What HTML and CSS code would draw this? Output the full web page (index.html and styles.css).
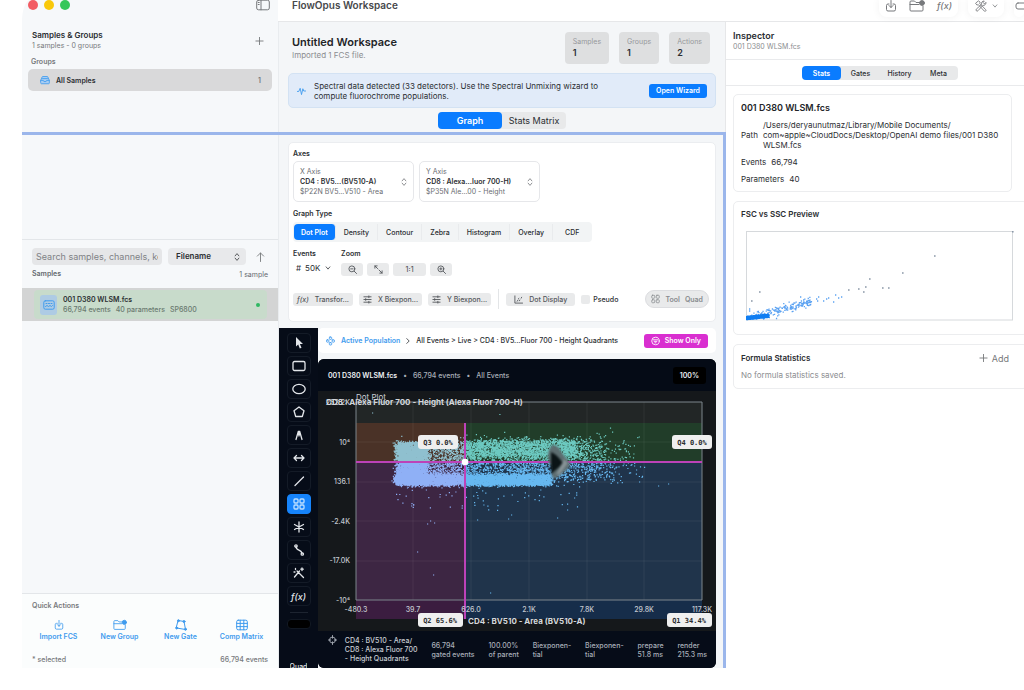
FILE: index.html
```html
<!DOCTYPE html>
<html lang="en">
<head>
<meta charset="utf-8">
<meta name="viewport" content="width=device-width, initial-scale=1">
<title>FlowOpus Workspace</title>
<link rel="stylesheet" href="styles.css">
</head>
<body>
<svg class="sprite" aria-hidden="true">
  <symbol id="i-import" viewBox="0 0 12 12"><path d="M4 4H3a1.5 1.5 0 0 0-1.500 1.500v4A1.500 1.500 0 0 0 3 11h6a1.500 1.500 0 0 0 1.500-1.500v-4A1.500 1.500 0 0 0 9 4H8M6 .5v7M4 5.500l2 2 2-2"/></symbol>
  <symbol id="i-folder" viewBox="0 0 16 12"><path d="M12 2.500H7L5.500 1H2a1 1 0 0 0-1 1v8a1 1 0 0 0 1 1h11a1 1 0 0 0 1-1V6M1 4.500h9"/><circle cx="13" cy="3" r="2.400" fill="currentColor"/></symbol>
  <symbol id="i-gate" viewBox="0 0 12 12"><path d="M3.500 1.500 9 2.500l1.500 8-9-1.500z"/><g fill="currentColor"><circle cx="3.500" cy="1.700" r="1"/><circle cx="9" cy="2.500" r="1"/><circle cx="10.500" cy="10.300" r="1"/><circle cx="1.700" cy="9" r="1"/></g></symbol>
  <symbol id="i-table" viewBox="0 0 12 11"><rect x=".7" y=".7" width="10.600" height="9.600" rx="1.500"/><path d="M.7 3.900h10.600M.7 7.100h10.600M4.200.7v9.600M7.800.7v9.600"/></symbol>
  <symbol id="i-updown" viewBox="0 0 8 12"><path d="m1.500 4.500 2.500-3 2.500 3M1.500 7.500l2.500 3 2.500-3"/></symbol>
  <symbol id="i-sliders" viewBox="0 0 10 10"><path d="M1 2h8M1 5h8M1 8h8M6.500 1v2M3 4v2M6.500 7v2"/></symbol>
  <symbol id="i-grid" viewBox="0 0 12 12"><rect x="1" y="1" width="4" height="4" rx="1"/><rect x="7" y="1" width="4" height="4" rx="1"/><rect x="1" y="7" width="4" height="4" rx="1"/><rect x="7" y="7" width="4" height="4" rx="1"/></symbol>
  <symbol id="i-plus" viewBox="0 0 10 10"><path d="M5 1v8M1 5h8"/></symbol>
  <symbol id="i-down" viewBox="0 0 8 8"><path d="m1.500 2.500 2.500 3 2.500-3"/></symbol>
</svg>

<div class="app">
  <aside class="sidebar">
    <div class="window-bar">
      <span class="light light-red"></span><span class="light light-yellow"></span><span class="light light-green"></span>
      <button class="plain push" aria-label="Toggle sidebar"><svg class="icon w14" viewBox="0 0 14 11"><rect x=".7" y=".7" width="12.600" height="9.600" rx="1.800"/><path d="M5 .7v9.600M2.200 3h1M2.200 5h1"/></svg></button>
    </div>

    <section class="groups">
      <div class="groups-head">
        <div>
          <h2>Samples &amp; Groups</h2>
          <p>1 samples - 0 groups</p>
        </div>
        <button class="plain" aria-label="Add group"><svg class="icon w8" ><use href="#i-plus"/></svg></button>
      </div>
      <h3>Groups</h3>
      <button class="group-row">
        <svg class="icon w10 blue" viewBox="0 0 12 10"><path fill="#a9cdf2" d="M.8 5.500 2.500 1.500a1 1 0 0 1 1-.7h5a1 1 0 0 1 1 .7l1.700 4v3a1 1 0 0 1-1 1H1.800a1 1 0 0 1-1-1z"/><path d="M.8 5.500H4a2 1.500 0 0 0 4 0h3.200M3 3.300h6"/></svg>
        <span>All Samples</span><span class="push count">1</span>
      </button>
    </section>

    <section class="samples">
      <div class="search-row">
        <input class="search" type="text" placeholder="Search samples, channels, keywords" aria-label="Search samples">
        <span class="select-wrap sort"><select aria-label="Sort by"><option>Filename</option></select><svg class="icon w6"><use href="#i-updown"/></svg></span>
        <button class="plain sort-dir" aria-label="Sort ascending"><svg class="icon w8" viewBox="0 0 10 12"><path d="M5 11V1.500M1.500 5 5 1.500 8.500 5"/></svg></button>
      </div>
      <div class="samples-head"><h3>Samples</h3><span>1 sample</span></div>
      <div class="sample-slot">
        <button class="sample">
          <span class="sample-icon"><svg class="icon w12 blue" viewBox="0 0 12 10"><rect x=".8" y=".8" width="10.400" height="8.400" rx="1.500"/><path d="M3 3.500h1M5.500 3.500h1M8 3.500h1M2.500 6.500l1.500-1 1.500 1 1.500-1 1.500 1 1-1"/></svg></span>
          <span class="sample-text"><b>001 D380 WLSM.fcs</b><span class="meta"><span>66,794 events</span><span>40 parameters</span><span>SP6800</span></span></span>
          <span class="dot-ok push"></span>
        </button>
      </div>
    </section>

    <section class="quick">
      <h3>Quick Actions</h3>
      <div class="quick-grid">
        <button><svg class="icon w10"><use href="#i-import"/></svg>Import FCS</button>
        <button><svg class="icon w14"><use href="#i-folder"/></svg>New Group</button>
        <button><svg class="icon w12"><use href="#i-gate"/></svg>New Gate</button>
        <button><svg class="icon w12"><use href="#i-table"/></svg>Comp Matrix</button>
      </div>
      <div class="quick-foot"><span>* selected</span><span>66,794 events</span></div>
    </section>
  </aside>

  <header class="titlebar">
    <h1>FlowOpus Workspace</h1>
    <div class="tools push">
      <button class="plain" aria-label="Import"><svg class="icon w12"><use href="#i-import"/></svg></button>
      <button class="plain" aria-label="New group"><svg class="icon w16"><use href="#i-folder"/></svg></button>
      <button class="plain fx">f(x)</button>
    </div>
    <div class="tools">
      <button class="plain pair" aria-label="Tools"><svg class="icon w14" viewBox="0 0 14 14"><path d="M1 3.500 4 1l2 1.500-.5 1.500 7 7.300a1.100 1.100 0 0 1-1.700 1.600L4 5.500l-1.300.3zM12.800 3.200a2.800 2.800 0 0 1-3.600 3L3.500 12.500a1.300 1.300 0 0 1-2-1.800L7.800 5a2.800 2.800 0 0 1 3-3.800L9.500 3l1.300 1.300z"/></svg><svg class="icon w6"><use href="#i-down"/></svg></button>
    </div>
    <div class="tools tools-cut"><button class="plain" aria-label="Panels"><svg class="icon w8" viewBox="0 0 9 8"><rect x="1" y="1" width="10" height="6" rx="2"/></svg></button></div>
  </header>

  <main class="center">
    <section class="intro">
      <div class="intro-title"><h2>Untitled Workspace</h2><p>Imported 1 FCS file.</p></div>
      <dl class="stats">
        <div><dt>Samples</dt><dd>1</dd></div>
        <div><dt>Groups</dt><dd>1</dd></div>
        <div><dt>Actions</dt><dd>2</dd></div>
      </dl>
    </section>

    <section class="banner">
      <svg class="icon w8 blue" viewBox="0 0 10 10"><path d="M.5 5.500H2L3.500 2l1.500 7 1.500-6.500L7.500 5h2"/></svg>
      <p>Spectral data detected (33 detectors). Use the Spectral Unmixing wizard to compute fluorochrome populations.</p>
      <button class="primary push">Open Wizard</button>
    </section>

    <div class="segment view-tabs" role="tablist">
      <button class="on" role="tab" aria-selected="true">Graph</button><button role="tab" aria-selected="false">Stats Matrix</button>
    </div>

    <section class="panel">
      <h3>Axes</h3>
      <div class="axes">
        <button class="axis"><span><span>X Axis</span><b>CD4 : BV5...(BV510-A)</b><span>$P22N BV5...V510 - Area</span></span><svg class="icon w6"><use href="#i-updown"/></svg></button>
        <button class="axis"><span><span>Y Axis</span><b>CD8 : Alexa...luor 700-H)</b><span>$P35N Ale...00 - Height</span></span><svg class="icon w6"><use href="#i-updown"/></svg></button>
      </div>
      <h3>Graph Type</h3>
      <div class="segment graph-types" role="tablist">
        <button class="on" role="tab" aria-selected="true">Dot Plot</button><button role="tab">Density</button><button role="tab">Contour</button><button role="tab">Zebra</button><button role="tab">Histogram</button><button role="tab">Overlay</button><button role="tab">CDF</button>
      </div>
      <div class="view-opts">
        <div class="opt">
          <label for="events">Events</label>
          <span class="select-wrap events"><span>#</span><select id="events"><option>50K</option></select><svg class="icon w6"><use href="#i-down"/></svg></span>
        </div>
        <div class="opt">
          <h3>Zoom</h3>
          <div class="zooms">
            <button class="chip" aria-label="Zoom out"><svg class="icon w8" viewBox="0 0 10 10"><circle cx="4.300" cy="4.300" r="3.300"/><path d="M7 7l2.500 2.500M3 4.300h2.600"/></svg></button>
            <button class="chip" aria-label="Fit"><svg class="icon w8" viewBox="0 0 10 10"><path d="M4 4 1 1m0 2.500V1h2.500M5.500 5.500 9 9M9 6.500V9H6.500"/></svg></button>
            <button class="chip wide">1:1</button>
            <button class="chip" aria-label="Zoom in"><svg class="icon w8" viewBox="0 0 10 10"><circle cx="4.300" cy="4.300" r="3.300"/><path d="M7 7l2.500 2.500M3 4.300h2.600M4.300 3v2.600"/></svg></button>
          </div>
        </div>
      </div>
      <div class="display-row">
        <button class="chip"><i>f(x)</i>Transfor...</button>
        <button class="chip"><svg class="icon w8"><use href="#i-sliders"/></svg>X Biexpon...</button>
        <button class="chip"><svg class="icon w8"><use href="#i-sliders"/></svg>Y Biexpon...</button>
        <span class="rule"></span>
        <button class="chip roomy"><svg class="icon w8" viewBox="0 0 10 10"><path d="M1 1v8h8.500M3.500 7l1-1.500M6 6.500l.5-1M5 4l.5-.5M8 3.500l.5-1"/></svg>Dot Display</button>
        <label class="check"><input type="checkbox">Pseudo</label>
        <button class="pill push"><svg class="icon w8"><use href="#i-grid"/></svg><span>Tool</span><span>Quad</span></button>
      </div>
    </section>

    <section class="graph">
      <nav class="gate-tools" aria-label="Gate tools">
        <button aria-label="Pointer"><svg class="icon w12" viewBox="0 0 12 12"><path fill="currentColor" stroke="none" d="M3 0v9.500l2.200-2L6.800 11.500l1.700-.7L6.900 7H10z"/></svg></button>
        <button aria-label="Rectangle"><svg class="icon w14" viewBox="0 0 14 12"><rect x="1" y="1.500" width="12" height="9" rx="1.500"/></svg></button>
        <button aria-label="Ellipse"><svg class="icon w14" viewBox="0 0 14 12"><ellipse cx="7" cy="6" rx="6.200" ry="4.700"/></svg></button>
        <button aria-label="Polygon"><svg class="icon w12" viewBox="0 0 12 12"><path d="M6 1 11 4.800 9.300 10.500H2.700L1 4.800z"/></svg></button>
        <button aria-label="Curve"><svg class="icon w12" viewBox="0 0 12 12"><path d="M3 10.500 5.300 2.500h1.400L9 10.500M5.300 2.500 6 7l.7-4.500"/></svg></button>
        <button aria-label="Range"><svg class="icon w12" viewBox="0 0 12 12"><path d="M1 6h10M3.500 3.500 1 6l2.500 2.500M8.500 3.500 11 6 8.500 8.500"/></svg></button>
        <button aria-label="Line"><svg class="icon w12" viewBox="0 0 12 12"><path d="M2 10.500 10.500 2"/></svg></button>
        <button class="on" aria-label="Quadrant"><svg class="icon w12"><use href="#i-grid"/></svg></button>
        <button aria-label="Spider"><svg class="icon w12" viewBox="0 0 12 12"><path d="M6 1v10M1.500 3.500l9 5M10.500 3.500l-9 5"/></svg></button>
        <button aria-label="Path"><svg class="icon w12" viewBox="0 0 12 12"><path d="M3 2.500c0 5 5.500 2 6 7"/><circle cx="3" cy="2" r="1.200"/><circle cx="9.300" cy="10" r="1.200"/></svg></button>
        <button aria-label="Magic wand"><svg class="icon w12" viewBox="0 0 12 12"><path d="M4 4l6.500 6.500M6.500 4 1.500 10M9 1v2.500M7.800 2.200h2.500M2.500 1.500v1M1 5h1"/></svg></button>
        <button class="fx" aria-label="Formula">f(x)</button>
        <span class="tool-rule"></span>
        <span class="swatch"></span>
        <span class="tool-label">Quad</span>
      </nav>

      <div class="graph-main">
        <div class="crumbs">
          <svg class="icon w8 blue" viewBox="0 0 10 10"><rect x="3.700" y=".6" width="2.600" height="2.600" rx=".8"/><rect x="3.700" y="6.800" width="2.600" height="2.600" rx=".8"/><rect x=".6" y="3.700" width="2.600" height="2.600" rx=".8"/><rect x="6.800" y="3.700" width="2.600" height="2.600" rx=".8"/></svg>
          <b class="blue">Active Population</b>
          <svg class="icon w4" viewBox="0 0 5 8"><path d="m1 1 3 3-3 3"/></svg>
          <span>All Events &gt; Live &gt; CD4 : BV5...Fluor 700 - Height Quadrants</span>
          <button class="show-only push"><svg class="icon w8" viewBox="0 0 10 10"><circle cx="5" cy="5" r="4.200"/><path d="M2.500 3.700h5M3.500 5.400h3M4.400 7h1.200"/></svg>Show Only</button>
        </div>

        <div class="plot-card">
          <div class="plot-head"><b>001 D380 WLSM.fcs</b><span>•</span><span>66,794 events</span><span>•</span><span>All Events</span><b class="percent push">100%</b></div>
          <svg class="plot" viewBox="0 0 398 240" role="img" aria-label="Dot plot of CD4 against CD8">
            <rect x="38" y="11" width="346" height="21" fill="#222626"/>
            <rect x="38" y="32" width="109" height="39" fill="#4a3227"/>
            <rect x="147" y="32" width="237" height="39" fill="#213d29"/>
            <rect x="38" y="71" width="109" height="157" fill="#3d2643"/>
            <rect x="147" y="71" width="237" height="157" fill="#20344b"/>
            <rect x="38" y="209" width="109" height="19" fill="#3a1740" opacity=".6"/>
            <rect x="147" y="209" width="237" height="19" fill="#102a4a" opacity=".6"/>
            <path class="grid" d="M95 11v198M153 11v198M211 11v198M269 11v198M326 11v198M38 51h346M38 91h346M38 130h346M38 170h346"/>
            <path class="frame" d="M38 11h346v198H38z"/>
            <g id="dots"></g>
            <path class="cross" d="M147 32v196M38 71h346"/>
            <g class="smudge"><path d="M236 54c6 1 7 8 13 14s2 9-4 14-10 8-11 3 1-6-2-11-3-19 4-20z" fill="#5d6d70"/><path d="M233 61c5 2 9 7 12 11-3 4-8 7-12 11z" fill="#0b1416"/><path d="M246 68l4 4-8 11-4 1z" fill="#a3adb0" opacity=".6"/></g>
            <circle cx="147" cy="71" r="3.300" fill="#fff"/>
            <g class="ticks">
              <text x="32" y="54" text-anchor="end">10⁴</text><text x="32" y="93" text-anchor="end">136.1</text><text x="32" y="133" text-anchor="end">-2.4K</text><text x="32" y="172" text-anchor="end">-17.0K</text><text x="32" y="212" text-anchor="end">-10⁴</text>
              <text x="38" y="221">-480.3</text><text x="95" y="221">39.7</text><text x="153" y="221">626.0</text><text x="211" y="221">2.1K</text><text x="269" y="221">7.8K</text><text x="326" y="221">29.8K</text><text x="384" y="221">117.3K</text>
              <text x="32" y="14" text-anchor="end">262.2K</text>
            </g>
            <text class="plot-title" x="38" y="9">Dot Plot</text>
            <text class="axis-title" x="8" y="14">CD8 : Alexa Fluor 700 - Height (Alexa Fluor 700-H)</text>
            <text class="axis-title" x="150" y="233">CD4 : BV510 - Area (BV510-A)</text>
            <g class="tag"><rect x="100" y="44" width="40" height="14" rx="3"/><text x="120" y="54">Q3 0.0%</text></g>
            <g class="tag"><rect x="354" y="44" width="40" height="14" rx="3"/><text x="374" y="54">Q4 0.0%</text></g>
            <g class="tag"><rect x="100" y="222" width="45" height="14" rx="3"/><text x="122" y="232">Q2 65.6%</text></g>
            <g class="tag"><rect x="349" y="222" width="45" height="14" rx="3"/><text x="371" y="232">Q1 34.4%</text></g>
          </svg>
          <div class="plot-foot">
            <svg class="icon w8" viewBox="0 0 10 10"><circle cx="5" cy="5" r="3.300"/><path d="M5 0v3M5 7v3M0 5h3M7 5h3"/></svg>
            <b>CD4 : BV510 - Area/<br>CD8 : Alexa Fluor 700<br>- Height Quadrants</b>
            <span>66,794<br>gated events</span><span>100.00%<br>of parent</span><span>Biexponen-<br>tial</span><span>Biexponen-<br>tial</span><span>prepare<br>51.8 ms</span><span>render<br>215.3 ms</span>
          </div>
        </div>
      </div>
    </section>
  </main>

  <aside class="inspector">
    <header class="inspector-head"><h2>Inspector</h2><p>001 D380 WLSM.fcs</p></header>
    <div class="inspector-tabs">
      <div class="segment" role="tablist">
        <button class="on" role="tab" aria-selected="true">Stats</button><button role="tab">Gates</button><button role="tab">History</button><button role="tab">Meta</button>
      </div>
    </div>
    <div class="cards">
      <section class="card file-card">
        <h2>001 D380 WLSM.fcs</h2>
        <dl>
          <div><dt>Path</dt><dd>/Users/deryaunutmaz/Library/Mobile Documents/<br>com~apple~CloudDocs/Desktop/OpenAI demo files/001 D380 WLSM.fcs</dd></div>
          <div><dt>Events</dt><dd>66,794</dd></div>
          <div><dt>Parameters</dt><dd>40</dd></div>
        </dl>
      </section>
      <section class="card bleed">
        <h3>FSC vs SSC Preview</h3>
        <svg class="preview" viewBox="0 0 268 90" role="img" aria-label="FSC vs SSC preview">
          <rect x=".5" y=".5" width="266" height="88.500" fill="none" stroke="#d6d9dc"/>
          <g id="preview-dots"></g>
        </svg>
      </section>
      <section class="card bleed">
        <div class="formula-head"><h3>Formula Statistics</h3><button class="plain push pair"><svg class="icon w8"><use href="#i-plus"/></svg>Add</button></div>
        <p>No formula statistics saved.</p>
      </section>
    </div>
  </aside>

  <div class="focus-ring"></div>
</div>
<script src="plot.js"></script>
</body>
</html>
```
FILE: styles.css
```css
* { box-sizing: border-box; }
body { margin: 0; background: #fff; color: #2b2e32; font: 8px/11px Inter, "Noto Sans", sans-serif; }
h1, h2, h3, p, dl, dd { margin: 0; }
h2, h3, b { font-weight: 600; }
h3 { font-size: 8px; line-height: 10px; }
button, input, select { font: inherit; color: inherit; margin: 0; padding: 0; border: 0; background: none; }
button { display: flex; align-items: center; justify-content: center; white-space: nowrap; }
select { appearance: none; }

.sprite { position: absolute; width: 0; height: 0; }
.icon { flex: none; fill: none; stroke: currentColor; stroke-width: 1; stroke-linecap: round; stroke-linejoin: round; height: 12px; }
.w4 { width: 4px; } .w6 { width: 6px; } .w8 { width: 9px; } .w10 { width: 10px; }
.w12 { width: 12px; } .w14 { width: 14px; } .w16 { width: 16px; }
.blue { color: #3f9bee; }
.push { margin-left: auto; }
.plain { color: #77797c; }
.pair { gap: 4px; }

.app { display: grid; grid-template-columns: 256px minmax(0, 1fr) 298px; grid-template-rows: 22px auto; margin-left: 22px; overflow: hidden; }
.focus-ring { grid-area: 2 / 1 / 3 / 3; margin-top: 110px; border: solid #9bb6eb; border-width: 3px 3px 0 0; pointer-events: none; z-index: 1; }

/* Sidebar */
.sidebar { grid-area: 1 / 1 / 3 / 2; display: flex; flex-direction: column; background: #f6f8fa; border-top-left-radius: 8px 22px; }
.window-bar { display: flex; gap: 6px; height: 10px; padding: 0 8px 0 6px; align-items: center; }
.light { width: 10px; height: 10px; border-radius: 50%; }
.light-red { background: #f25c63; } .light-yellow { background: #f9c80a; } .light-green { background: #35c759; }
.groups { min-height: 230px; padding: 20px 6px 0; border-bottom: 1px solid #e3e6e9; }
.groups-head { display: flex; justify-content: space-between; align-items: center; padding: 0 8px 0 4px; }
.groups-head h2 { font-size: 8px; line-height: 10px; }
.groups-head p { color: #77797c; font-size: 7px; line-height: 12px; }
.groups h3 { margin: 5px 0 2px 3px; color: #77797c; font-size: 7px; }
.group-row { width: 100%; height: 22px; gap: 6px; padding: 0 11px 0 12px; border-radius: 5px; background: #d9d9da; font-size: 7px; font-weight: 600; }
.count { color: #77797c; }
.samples { flex: 1; padding-top: 8px; }
.search-row { display: flex; align-items: center; gap: 6px; padding: 0 9px 0 10px; font-size: 9px; }
.search { flex: 1; min-width: 0; height: 17px; padding: 0 4px; border-radius: 4px; background: #e5e6e8; }
.search::placeholder { color: #808286; opacity: 1; }
.select-wrap { display: flex; align-items: center; }
.sort { width: 78px; height: 17px; padding: 0 6px 0 8px; border-radius: 4px; background: #e8e9eb; }
.sort select { flex: 1; font-size: 8px; font-weight: 600; }
.sort-dir { width: 17px; }
.samples-head { display: flex; justify-content: space-between; margin: 4px 0 8px; padding: 0 10px; color: #65696f; font-size: 7px; }
.samples-head h3 { font-size: 7px; }
.sample-slot { padding: 2px 11px 2px 12px; background: #d3d4d4; }
.sample { width: 100%; height: 29px; padding: 0 7px 0 6px; gap: 6px; border-radius: 4px; background: #c8dbcb; text-align: left; }
.sample-icon { display: grid; place-items: center; width: 17px; height: 20px; border-radius: 3px; background: #aecbe4; }
.sample-text { display: grid; line-height: 10px; font-size: 7px; }
.meta { display: flex; gap: 5px; color: #6a7a70; font-weight: 500; }
.dot-ok { width: 4px; height: 4px; border-radius: 50%; background: #2fb862; }
.quick { padding: 7px 10px 0; height: 75px; border-top: 1px solid #e3e6e9; background: #fbfdfd; color: #77797c; }
.quick h3 { font-size: 7px; }
.quick-grid { display: grid; grid-template-columns: repeat(4, 1fr); margin: 8px -4px 0; }
.quick-grid button { flex-direction: column; gap: 1px; color: #3f9bee; font-size: 7px; line-height: 10px; font-weight: 600; }
.quick-foot { display: flex; justify-content: space-between; margin-top: 12px; font-size: 7px; font-weight: 500; }

/* Title bar */
.titlebar { grid-area: 1 / 2 / 2 / 4; display: flex; align-items: flex-start; gap: 10px; padding-left: 14px; border-bottom: 1px solid #e6e7e9; background: #fff; z-index: 2; }
.titlebar h1 { font-size: 10px; line-height: 11px; font-weight: 600; color: #46484b; }
.tools { display: flex; align-items: center; gap: 12px; height: 17px; padding: 0 6px 6px; border-radius: 0 0 8px 8px; box-shadow: 0 0 8px #0000000f; }
.tools-cut { width: 10px; padding: 0 0 6px 1px; overflow: hidden; }
.fx { font-style: italic; font-size: 9px; font-weight: 500; }

/* Centre column */
.center { grid-area: 2 / 2 / 3 / 3; background: #f4f6f8; border-right: 1px solid #e6e7e9; border-left: 1px solid #e9ecef; }
.intro { display: flex; justify-content: space-between; padding: 10px 15px 0 13px; }
.intro h2 { margin-top: 3px; font-size: 11px; line-height: 14px; color: #222427; }
.intro p { color: #8b8d90; line-height: 13px; }
.stats { display: flex; gap: 10px; }
.stats div { min-width: 40px; height: 32px; padding: 5px 8px; border-radius: 4px; background: #dedfe0; }
.stats dt { font-size: 7px; line-height: 10px; color: #96989b; }
.stats dd { font-size: 9px; line-height: 12px; font-weight: 600; }
.banner { display: flex; align-items: center; gap: 8px; height: 35px; margin: 9px 9px 0 9px; padding: 0 8px; border: 1px solid #d3e2f3; border-radius: 5px; background: #e1ebf9; }
.banner p { max-width: 300px; line-height: 10px; }
.primary { height: 14px; padding: 0 7px; border-radius: 3px; background: #0a7cff; color: #fff; font-size: 7px; font-weight: 600; }
.segment { display: flex; border-radius: 4px; background: #e8e9ea; width: max-content; }
.segment .on { background: #0a7cff; color: #fff; border-radius: 4px; font-weight: 600; }
.view-tabs { height: 17px; margin: 4px auto 13px; font-size: 9px; }
.view-tabs button { width: 64px; }
.panel { margin: 0 9px 6px 9px; min-height: 180px; padding: 6px 6px 0 4px; border: 1px solid #ebedf0; border-radius: 5px; background: #fff; }
.panel h3, .opt label { font-size: 7px; line-height: 10px; font-weight: 600; }
.axes { display: flex; gap: 5px; margin: 2px 0 7px; }
.axis { width: 121px; height: 41px; padding: 0 6px; justify-content: space-between; border: 1px solid #e6e7ea; border-radius: 5px; text-align: left; font-size: 7px; line-height: 10px; color: #6b6e72; }
.axis > span { display: grid; }
.axis b { color: #2b2e32; }
.graph-types { height: 20px; margin: 3px 0 7px; padding: 2px 1px; background: #f2f4f5; font-size: 7px; }
.graph-types button { padding: 0 8px; border-right: 1px solid #e9ebed; font-weight: 500; }
.graph-types .on { padding: 0 7px; }
.graph-types button:last-child { padding: 0 12px; border: 0; }
.view-opts { display: flex; gap: 10px; }
.opt { display: grid; align-content: start; gap: 4px; }
.events { gap: 4px; height: 10px; padding-left: 3px; }
.zooms { display: flex; gap: 4px; }
.chip { height: 13px; min-width: 22px; gap: 6px; padding: 0 4px; border-radius: 3px; background: #e9eaeb; color: #55585c; font-size: 7px; font-weight: 500; }
.chip.wide { width: 33px; }
.chip.roomy { padding: 0 8px; }
.zooms .icon, .chip .icon { height: 9px; }
.display-row { display: flex; align-items: center; gap: 6px; margin-top: 13px; }
.rule { width: 1px; height: 20px; background: #e3e5e7; margin: 0 1px; }
.check { display: flex; align-items: center; gap: 3px; font-size: 7px; font-weight: 500; }
.check input { appearance: none; width: 9px; height: 9px; border-radius: 2px; background: #e9eaeb; }
.pill { height: 18px; gap: 5px; padding: 0 5px; border-radius: 9px; border: 1px solid #dcdde0; background: #e9eaeb; color: #888b8f; font-size: 7px; font-weight: 600; }

/* Graph */
.graph { display: flex; }
.gate-tools { display: flex; flex-direction: column; align-items: center; gap: 3px; width: 39px; padding-top: 5px; background: #060c18; color: #e3e6ea; }
.gate-tools button { width: 24px; height: 20px; border: 1px solid #141b27; border-radius: 4px; }
.gate-tools .on { background: #1684fb; border-color: #1684fb; color: #bfe0ff; }
.gate-tools .icon { stroke-width: 1.3; }
.tool-rule { width: 18px; height: 1px; margin-top: 3px; background: #1d2430; }
.swatch { width: 24px; height: 10px; margin-top: 3px; border-radius: 4px; background: #000; border: 1px solid #111823; }
.tool-label { height: 6px; margin-top: auto; overflow: hidden; font-size: 7px; line-height: 9px; font-weight: 500; }
.graph-main { flex: 1; min-width: 0; margin-right: 9px; }
.crumbs { display: flex; align-items: center; gap: 6px; height: 25px; padding: 0 8px; border-radius: 5px; background: #fff; font-size: 7px; font-weight: 500; white-space: nowrap; }
.show-only { height: 14px; gap: 5px; padding: 0 7px; border-radius: 3px; background: #d92fd0; color: #fff; font-weight: 600; }
.plot-card { margin-top: 6px; border-radius: 6px; overflow: hidden; background: #15181b; color: #dfe3e8; }
.plot-head { display: flex; align-items: center; gap: 6px; height: 32px; padding: 0 10px; background: #050b16; font-size: 7px; font-weight: 500; color: #a9afb8; }
.plot-head b { color: #eef1f4; }
.percent { padding: 3px 7px; border-radius: 3px; background: #000; font-size: 7px; }
.plot { display: block; width: 100%; font-family: Inter, sans-serif; }
.grid { fill: none; stroke: #ffffff10; }
.frame { fill: none; stroke: #7d858c; stroke-width: 1; }
.cross { fill: none; stroke: #bd42b8; stroke-width: 2; }
.smudge { filter: blur(1px); }
.ticks { font-size: 7px; font-weight: 500; fill: #c3c8cf; text-anchor: middle; }
.plot-title { font-size: 8px; fill: #c9ced4; }
.axis-title { font-size: 8px; font-weight: 700; fill: #d3d7dc; }
.tag rect { fill: #efefef; }
.tag text { font: 700 7px "DejaVu Sans Mono", monospace; fill: #2a2c2e; text-anchor: middle; }
.plot-foot { display: flex; align-items: center; justify-content: space-between; height: 37px; padding: 0 9px 0 10px; background: #060c18; font-size: 7px; line-height: 9px; font-weight: 500; color: #a9afb8; }
.plot-foot .icon { align-self: flex-start; margin: 3px -6px 0 0; }
.plot-foot b { font-weight: 500; color: #c9ced4; }

/* Inspector */
.inspector { grid-area: 2 / 3 / 3 / 4; min-width: 0; background: #fff; }
.inspector-head { height: 38px; padding: 8px 7px 0; border-bottom: 1px solid #e9eaec; }
.inspector-head h2 { font-size: 9px; line-height: 12px; }
.inspector-head p { font-size: 7px; line-height: 10px; color: #8b8d90; }
.inspector-tabs { display: flex; justify-content: center; padding: 6px 0 5px 10px; border-bottom: 1px solid #e9eaec; }
.inspector-tabs .segment { height: 14px; font-size: 7px; }
.inspector-tabs button { width: 39px; font-weight: 500; }
.cards { display: grid; gap: 9px; padding: 8px 12px 0 7px; }
.card { padding: 7px; border: 1px solid #ecedef; border-radius: 5px; }
.bleed { margin-right: -16px; padding-right: 18px; }
.file-card h2 { font-size: 9px; line-height: 12px; color: #222427; }
.file-card dl { display: grid; gap: 7px; margin-top: 6px; line-height: 10px; font-size: 8px; }
.file-card dl div { display: flex; align-items: center; gap: 5px; }
.preview { display: block; width: 268px; max-width: 100%; margin: 12px 0 6px 5px; }
.formula-head { display: flex; align-items: center; font-size: 9px; margin-bottom: 6px; }
.formula-head + p { color: #8b8d90; }
```
FILE: plot.js
```js
// Small seeded generator so that every load draws the same events.
let seed = 7;
const rnd = () => (seed = (seed * 16807) % 2147483647) / 2147483647;
const gauss = () => (rnd() + rnd() + rnd() + rnd() - 2) * 0.86;

const NS = "http://www.w3.org/2000/svg";
function layer(parent, color, points, size) {
  const path = document.createElementNS(NS, "path");
  path.setAttribute("d", points.map(([x, y]) => `M${x.toFixed(1)} ${y.toFixed(1)}h${size}`).join(""));
  path.setAttribute("stroke", color);
  path.setAttribute("stroke-width", size);
  parent.appendChild(path);
}

const SPLIT_X = 147, SPLIT_Y = 71;
const quads = { q3: [], q4: [], q2: [], q1: [] };
function add(x, y) {
  if (x < 40 || x > 382 || y < 14 || y > 206) return;
  const key = y < SPLIT_Y ? (x < SPLIT_X ? "q3" : "q4") : (x < SPLIT_X ? "q2" : "q1");
  quads[key].push([x, y]);
}
function box(n, x0, x1, y0, y1, sx, sy) {
  for (let i = 0; i < n; i++) add(x0 + rnd() * (x1 - x0) + gauss() * sx, y0 + rnd() * (y1 - y0) + gauss() * sy);
}
box(4600, 79, 108, 52, 93, 4, 2.5);
box(5400, 78, 232, 84, 94, 5, 2);
box(800, 108, 150, 51, 84, 3, 3);
box(2300, 147, 260, 50, 65, 8, 4);
box(1100, 147, 250, 62, 86, 6, 2);
box(600, 240, 285, 50, 88, 12, 6);
box(120, 280, 312, 50, 85, 16, 12);
box(260, 78, 250, 47, 97, 12, 5);
box(60, 75, 260, 97, 116, 12, 6);
box(16, 60, 340, 24, 100, 10, 6);
[[116,132],[109,133],[112,130],[99,161],[115,184],[172,202],[159,129],[190,128],[193,124],[239,127],[249,119],[256,107],[318,79],[321,91],[340,95],[350,93],[54,22]].forEach(p => add(...p));

const dots = document.getElementById("dots");
layer(dots, "#8fc0cf", quads.q3, 1.2);
layer(dots, "#6cc9c0", quads.q4, 1.2);
layer(dots, "#8fb0f6", quads.q2, 1.2);
layer(dots, "#66b8f0", quads.q1, 1.2);

const near = [], mid = [];
for (let i = 0; i < 500; i++) {
  const x = rnd() * 22;
  near.push([x, 88.500 - x * 0.1 - rnd() * 3]);
}
for (let i = 0; i < 210; i++) {
  const x = 3 + rnd() * 62;
  mid.push([x, Math.min(88, 88 - x * 0.27 + gauss() * 5)]);
}
[[70,68],[71,70],[72,66],[77,70],[80,68],[82,67],[87,71],[89,64],[92,67],[95,66],[3,78],[3,80],[54,66],[57,69]].forEach(p => mid.push(p));
const far = [[5,70],[13,61],[102,59],[112,58],[117,61],[119,56],[123,48],[136,57],[142,57],[156,42],[188,25],[266,0.8]];
const preview = document.getElementById("preview-dots");
layer(preview, "#5ba2f2", mid, 1.3);
layer(preview, "#0f7df2", near, 1.6);
layer(preview, "#8b98a8", far, 1.6);
```
